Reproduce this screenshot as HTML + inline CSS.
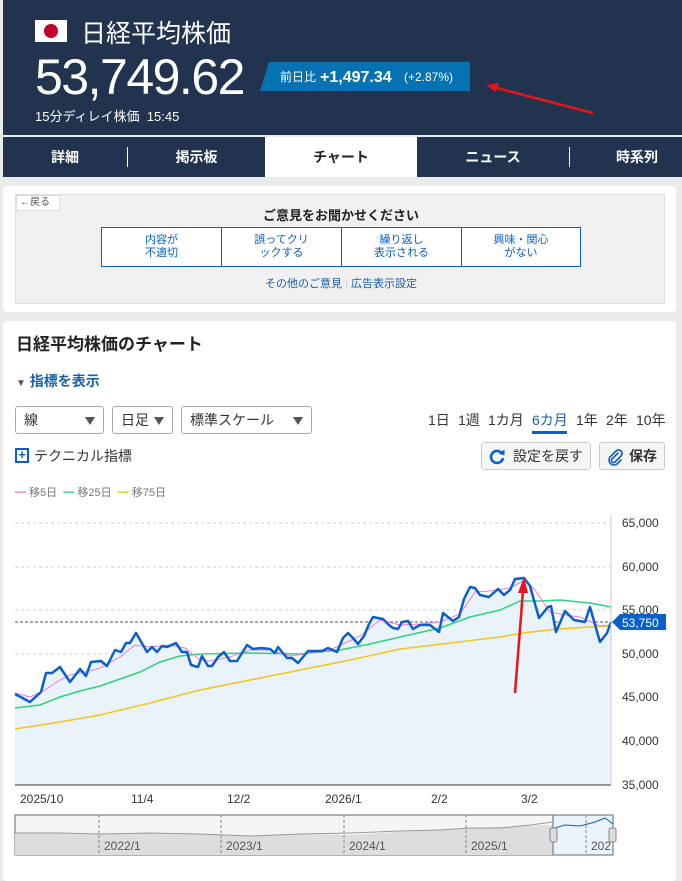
<!DOCTYPE html>
<html><head><meta charset="utf-8"><style>
*{box-sizing:border-box;margin:0;padding:0}
body{width:682px;height:873px;overflow:hidden;background:#ebebeb;font-family:"Liberation Sans","Noto Sans CJK JP",sans-serif;position:relative}
.a{position:absolute}
.hdr{left:3px;top:0;width:679px;height:135px;background:#22334f;color:#fff;overflow:hidden}
.tabs{left:3px;top:137px;width:679px;height:40px;background:#22334f}
.tab{position:absolute;top:0;height:40px;line-height:40px;text-align:center;color:#fff;font-weight:bold;font-size:14px}
.sep{position:absolute;top:10px;width:1px;height:20px;background:#fff}
.card{background:#fff;border-radius:4px}
.fb{left:15px;top:194px;width:650px;height:110px;background:#f0f0f0;border:1px solid #ddd}
.btn4{position:absolute;top:32px;height:40px;border:1px solid #0b5fc9;background:#fff;color:#0b5fc9;font-size:11px;line-height:13px;text-align:center;padding-top:6px}
.sel{position:absolute;top:406px;height:28px;border:1px solid #aaa;border-radius:3px;font-size:14px;color:#333;line-height:26px;padding-left:8px;background:#fff}
.sel:after{content:"";position:absolute;right:8px;top:10px;border-left:5px solid transparent;border-right:5px solid transparent;border-top:8px solid #555}
.pr{position:absolute;top:410px;font-size:14px;color:#333}
.ylab{position:absolute;left:622px;font-size:12px;color:#333}
.xlab{position:absolute;top:792px;font-size:12px;color:#333}
</style></head><body>
<div class="a hdr">
 <div class="a" style="left:32px;top:-9px;font-size:11px;color:#fff">2026/3/13</div>
 <div class="a" style="left:32px;top:20px;width:32px;height:22px;background:#fff"><div class="a" style="left:9px;top:4px;width:14px;height:14px;border-radius:50%;background:#c4002b"></div></div>
 <div class="a" style="left:78px;top:14px;font-size:25px;color:#fff">日経平均株価</div>
 <div class="a" style="left:32px;top:50px;font-size:50px;letter-spacing:-1.5px;line-height:54px">53,749.62</div>
 <svg class="a" style="left:257px;top:62px" width="210" height="29"><polygon points="9,0 210,0 210,29 0,29" fill="#0672b2"/>
 <text x="20" y="19" fill="#fff" font-size="12" font-family="Liberation Sans,Noto Sans CJK JP,sans-serif">前日比</text>
 <text x="60" y="20" fill="#fff" font-size="16" font-weight="bold" font-family="Liberation Sans,sans-serif">+1,497.34</text>
 <text x="144" y="19" fill="#fff" font-size="12" font-family="Liberation Sans,sans-serif">(+2.87%)</text></svg>
 <div class="a" style="left:32px;top:106px;font-size:13px">15分ディレイ株価&nbsp; 15:45</div>
 <svg class="a" style="left:480px;top:80px" width="120" height="40"><line x1="110" y1="33" x2="10" y2="7" stroke="#e8141b" stroke-width="2.5"/><polygon points="3,5 16,3 13,12" fill="#e8141b"/></svg>
</div>
<div class="a tabs">
 <div class="tab" style="left:0;width:124px">詳細</div><div class="sep" style="left:124px"></div>
 <div class="tab" style="left:125px;width:137px">掲示板</div>
 <div class="tab" style="left:262px;width:152px;background:#fff;color:#222">チャート</div>
 <div class="tab" style="left:414px;width:152px">ニュース</div><div class="sep" style="left:566px"></div>
 <div class="tab" style="left:567px;width:112px;text-align:right;padding-right:24px">時系列</div>
</div>
<div class="a card" style="left:3px;top:186px;width:673px;height:126px"></div>
<div class="a fb">
 <div class="a" style="left:0;top:0;width:44px;height:16px;background:#fff;border:1px solid #ddd;font-size:10px;color:#555;line-height:14px;padding-left:3px">←戻る</div>
 <div class="a" style="left:0;top:10px;width:650px;text-align:center;font-size:13px;font-weight:bold;color:#222">ご意見をお聞かせください</div>
 <div class="btn4" style="left:85px;width:121px">内容が<br>不適切</div>
 <div class="btn4" style="left:205px;width:121px">誤ってクリ<br>ックする</div>
 <div class="btn4" style="left:325px;width:121px">繰り返し<br>表示される</div>
 <div class="btn4" style="left:445px;width:120px">興味・関心<br>がない</div>
 <div class="a" style="left:0;top:80px;width:650px;text-align:center;font-size:11px;color:#1a5fa8">その他のご意見 <span style="color:#ccc">|</span> 広告表示設定</div>
</div>
<div class="a card" style="left:3px;top:321px;width:673px;height:560px"></div>
<div class="a" style="left:16px;top:330px;font-size:17px;font-weight:bold;color:#222">日経平均株価のチャート</div>
<div class="a" style="left:16px;top:371px;font-size:14px;font-weight:bold;color:#1a5fa8"><span style="font-size:10px;color:#555">▼</span> 指標を表示</div>
<div class="sel" style="left:15px;width:89px">線</div>
<div class="sel" style="left:112px;width:61px">日足</div>
<div class="sel" style="left:181px;width:131px">標準スケール</div>
<div class="pr" style="left:428px">1日</div><div class="pr" style="left:458px">1週</div><div class="pr" style="left:488px">1カ月</div>
<div class="pr" style="left:532px;color:#1a5fa8">6カ月</div><div class="a" style="left:532px;top:431px;width:35px;height:3px;background:#0b5fc9"></div>
<div class="pr" style="left:576px">1年</div><div class="pr" style="left:606px">2年</div><div class="pr" style="left:636px">10年</div>
<div class="a" style="left:15px;top:448px;width:14px;height:15px;border:2px solid #0b5fc9;color:#0b5fc9;font-size:13px;line-height:10px;text-align:center;font-weight:bold">+</div>
<div class="a" style="left:34px;top:446px;font-size:14px;color:#333">テクニカル指標</div>
<div class="a" style="left:481px;top:442px;width:110px;height:28px;border:1px solid #ccc;border-radius:3px;background:#f5f5f5;font-size:14px;color:#333;line-height:26px;padding-left:31px">設定を戻す
<svg class="a" style="left:6px;top:5px" width="18" height="18" viewBox="0 0 18 18"><path d="M14 5.5A6 6 0 1 0 15 10" fill="none" stroke="#0b5fc9" stroke-width="2.6"/><polygon points="10.5,5.5 16.5,1.5 16.5,7.5" fill="#0b5fc9"/></svg></div>
<div class="a" style="left:599px;top:442px;width:66px;height:28px;border:1px solid #ccc;border-radius:3px;background:#f5f5f5;font-size:14px;font-weight:bold;color:#333;line-height:26px;padding-left:29px">保存
<svg class="a" style="left:6px;top:5px" width="18" height="18" viewBox="0 0 18 18"><path d="M12 5 L6 11 a2 2 0 0 0 3 3 L15 8 a3.5 3.5 0 0 0 -5 -5 L4 9 a5 5 0 0 0 7 7 L15 12" fill="none" stroke="#0b5fc9" stroke-width="1.6" stroke-linecap="round"/></svg></div>
<div class="a" style="left:15px;top:484px;font-size:11px;color:#777"><span style="color:#e87de8">━</span> 移5日 &nbsp;<span style="color:#2ed47a">━</span> 移25日 &nbsp;<span style="color:#f5c518">━</span> 移75日</div>
<svg class="a" style="left:0;top:500px" width="682" height="373">
<g stroke="#ccc" stroke-dasharray="3,3"><line x1="15" y1="23" x2="611" y2="23"/><line x1="15" y1="67" x2="611" y2="67"/><line x1="15" y1="110" x2="611" y2="110"/><line x1="15" y1="154" x2="611" y2="154"/><line x1="15" y1="197" x2="611" y2="197"/><line x1="15" y1="241" x2="611" y2="241"/></g>
<line x1="15" y1="122" x2="611" y2="122" stroke="#555" stroke-dasharray="3,2"/>
<g transform="translate(0,-500)">
<polygon fill="#eaf2fa" points="15,785 15,694 30,702 41,692 46,673 52,673 60,667 70,682 80,669 86,676 91,662 101,661 107,666 115,650 121,652 126,643 130,643 136,633 147,652 152,647 157,652 162,646 167,647 176,643 182,652 187,652 191,665 198,667 202,656 208,666 212,666 218,657 224,652 230,661 237,661 247,645 253,649 261,648 270,649 275,653 278,647 287,658 292,658 298,663 308,651 322,651 328,648 337,652 343,638 348,633 352,637 358,644 364,636 369,624 373,617 383,619 389,625 393,628 398,629 402,622 408,621 413,629 420,625 430,625 439,632 443,613 453,621 459,617 464,599 470,587 475,588 480,595 489,597 498,589 504,595 510,590 515,579 524,578 530,586 539,618 548,607 551,606 556,632 565,611 574,620 585,622 590,607 600,642 607,633 611,622 611,785"/>
<polyline fill="none" stroke="#f5c518" stroke-width="1.5" points="15,729 60,722 100,715 150,703 200,690 250,680 300,670 350,660 400,649 450,643 500,637 530,632 560,629 590,627 611,626"/>
<polyline fill="none" stroke="#2ed47a" stroke-width="1.5" points="15,708 40,705 60,697 80,691 100,686 120,679 140,672 160,662 180,656 200,654 250,653 300,654 340,650 370,644 400,637 440,628 470,617 500,610 520,601 540,601 560,600 590,603 611,607"/>
<polyline fill="none" stroke="#e87de8" stroke-width="1" points="15,693 30,697 45,690 60,680 70,675 85,672 100,668 120,657 135,645 150,647 170,645 185,648 200,660 210,661 230,657 250,650 270,650 290,656 305,654 330,650 345,643 360,636 380,620 400,625 420,624 440,622 460,614 475,592 490,591 510,588 525,580 535,590 550,612 565,615 580,617 600,626 611,625"/>
<polyline fill="none" stroke="#0b5fc9" stroke-width="2.5" stroke-linejoin="round" points="15,694 30,702 41,692 46,673 52,673 60,667 70,682 80,669 86,676 91,662 101,661 107,666 115,650 121,652 126,643 130,643 136,633 147,652 152,647 157,652 162,646 167,647 176,643 182,652 187,652 191,665 198,667 202,656 208,666 212,666 218,657 224,652 230,661 237,661 247,645 253,649 261,648 270,649 275,653 278,647 287,658 292,658 298,663 308,651 322,651 328,648 337,652 343,638 348,633 352,637 358,644 364,636 369,624 373,617 383,619 389,625 393,628 398,629 402,622 408,621 413,629 420,625 430,625 439,632 443,613 453,621 459,617 464,599 470,587 475,588 480,595 489,597 498,589 504,595 510,590 515,579 524,578 530,586 539,618 548,607 551,606 556,632 565,611 574,620 585,622 590,607 600,642 607,633 611,622"/>
<line x1="515" y1="693" x2="523" y2="590" stroke="#e8141b" stroke-width="2.5"/><polygon points="518,593 528,593 524,577" fill="#e8141b"/>
</g>
<line x1="15" y1="285" x2="611" y2="285" stroke="#333"/>
<line x1="611" y1="15" x2="611" y2="285" stroke="#ccc"/>
<polygon points="612,122 620,114 666,114 666,130 620,130" fill="#0b5fc9"/>
<text x="622" y="127" fill="#fff" font-size="12" font-family="Liberation Sans,sans-serif">53,750</text>
<rect x="15" y="315" width="598" height="40" fill="#f5f5f5" stroke="#666"/>
<polygon fill="#ddd" points="15,333 60,333 100,334 150,333 200,334 250,336 300,334 350,335 400,332 450,329 500,327 550,325 553,325 553,355 15,355"/>
<polyline fill="none" stroke="#999" points="15,333 60,333 100,334 150,333 200,334 250,336 300,334 350,333 400,331 440,330 470,328 500,328 530,325 553,322"/>
<rect x="553" y="315" width="60" height="40" fill="#eaf2fa" stroke="#666"/>
<polyline fill="none" stroke="#0b5fc9" points="555,328 565,325 580,326 595,322 605,318 613,324"/>
<g stroke="#888" stroke-dasharray="3,2"><line x1="99" y1="315" x2="99" y2="355"/><line x1="221" y1="315" x2="221" y2="355"/><line x1="344" y1="315" x2="344" y2="355"/><line x1="466" y1="315" x2="466" y2="355"/><line x1="586" y1="315" x2="586" y2="355"/></g>
<rect x="550" y="328" width="7" height="14" rx="2" fill="#ddd" stroke="#888"/><rect x="609" y="328" width="7" height="14" rx="2" fill="#ddd" stroke="#888"/>
<g font-size="12" fill="#555" font-family="Liberation Sans,sans-serif"><text x="104" y="350">2022/1</text><text x="226" y="350">2023/1</text><text x="349" y="350">2024/1</text><text x="471" y="350">2025/1</text><text x="591" y="350">202</text></g>
</svg>
<div class="ylab" style="top:516px">65,000</div><div class="ylab" style="top:560px">60,000</div><div class="ylab" style="top:603px">55,000</div><div class="ylab" style="top:647px">50,000</div><div class="ylab" style="top:690px">45,000</div><div class="ylab" style="top:734px">40,000</div><div class="ylab" style="top:778px">35,000</div>
<div class="xlab" style="left:20px">2025/10</div><div class="xlab" style="left:131px">11/4</div><div class="xlab" style="left:227px">12/2</div><div class="xlab" style="left:325px">2026/1</div><div class="xlab" style="left:431px">2/2</div><div class="xlab" style="left:521px">3/2</div>
</body></html>
